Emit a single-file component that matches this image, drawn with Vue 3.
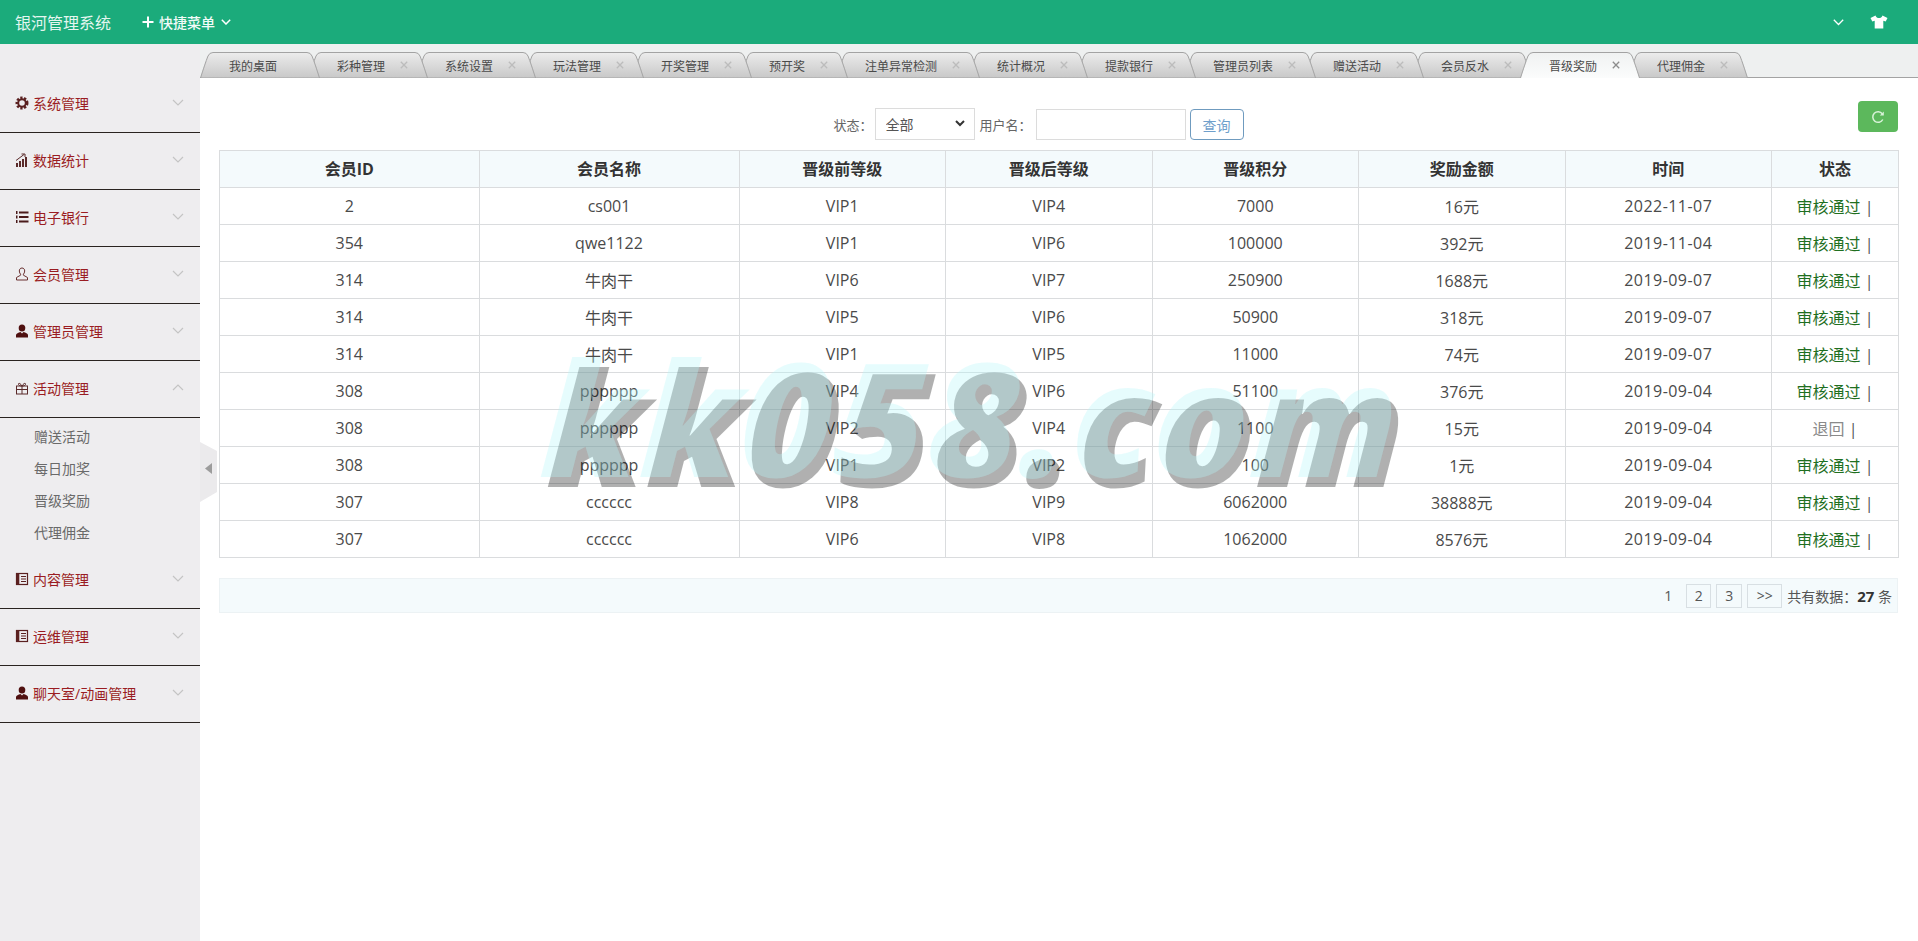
<script setup>
const menu = [
  { name: '系统管理', icon: 'gear' },
  { name: '数据统计', icon: 'chart' },
  { name: '电子银行', icon: 'list' },
  { name: '会员管理', icon: 'user' },
  { name: '管理员管理', icon: 'admin' },
  { name: '活动管理', icon: 'gift', open: true, subs: ['赠送活动', '每日加奖', '晋级奖励', '代理佣金'] },
  { name: '内容管理', icon: 'book' },
  { name: '运维管理', icon: 'book' },
  { name: '聊天室/动画管理', icon: 'admin' }
]

const tabNames = ['我的桌面', '彩种管理', '系统设置', '玩法管理', '开奖管理', '预开奖', '注单异常检测', '统计概况', '提款银行', '管理员列表', '赠送活动', '会员反水', '晋级奖励', '代理佣金']
const tabs = tabNames.map((name, i) => {
  const w = name.length * 12 + 72
  const edge = `M0.5 26C3 18 6 9 8 4Q9.5 .5 13 .5L${w - 13} .5Q${w - 9.5} .5 ${w - 8} 4C${w - 6} 9 ${w - 3} 18 ${w - 0.5} 26`
  return { name, w, edge, z: tabNames.length - i, active: name === '晋级奖励', closable: i > 0 }
})

const columns = ['会员ID', '会员名称', '晋级前等级', '晋级后等级', '晋级积分', '奖励金额', '时间', '状态']
const widths = [259.5, 260, 206.5, 206.5, 206.5, 206.5, 206.5, 127]
const rows = [
  ['2', 'cs001', 'VIP1', 'VIP4', '7000', '16元', '2022-11-07', 1],
  ['354', 'qwe1122', 'VIP1', 'VIP6', '100000', '392元', '2019-11-04', 1],
  ['314', '牛肉干', 'VIP6', 'VIP7', '250900', '1688元', '2019-09-07', 1],
  ['314', '牛肉干', 'VIP5', 'VIP6', '50900', '318元', '2019-09-07', 1],
  ['314', '牛肉干', 'VIP1', 'VIP5', '11000', '74元', '2019-09-07', 1],
  ['308', 'pppppp', 'VIP4', 'VIP6', '51100', '376元', '2019-09-04', 1],
  ['308', 'pppppp', 'VIP2', 'VIP4', '1100', '15元', '2019-09-04', 0],
  ['308', 'pppppp', 'VIP1', 'VIP2', '100', '1元', '2019-09-04', 1],
  ['307', 'cccccc', 'VIP8', 'VIP9', '6062000', '38888元', '2019-09-04', 1],
  ['307', 'cccccc', 'VIP6', 'VIP8', '1062000', '8576元', '2019-09-04', 1]
]
</script>

<template>
  <div class="page">
    <header class="topbar">
      <span class="brand">银河管理系统</span>
      <span class="quick">
        <svg class="plus" viewBox="0 0 12 12" width="12" height="12"><path d="M6 .5v11M.5 6h11" stroke="#fff" stroke-width="2" fill="none" /></svg>
        快捷菜单
        <svg class="chev" viewBox="0 0 10 6" width="10" height="6"><path d="M.8.8 5 5 9.2.8" stroke="#fff" stroke-width="1.5" fill="none" /></svg>
      </span>
      <span class="spacer"></span>
      <svg class="top-chev" viewBox="0 0 11 7" width="11" height="7"><path d="M.8.8 5.5 5.5 10.2.8" stroke="#fff" stroke-width="1.3" fill="none" /></svg>
      <svg class="shirt" viewBox="0 0 18 14" width="18" height="14"><path d="M5.5 .5 0.5 3l1.8 3.6 2.4-.9V13.5h8.6V5.7l2.4.9L17.500 3 12.500 .5C11.800 2.400 10.500 3 9 3S6.200 2.400 5.500 .5Z" fill="#fff" /></svg>
    </header>

    <div class="body">
      <aside class="sidebar">
        <template v-for="m in menu" :key="m.name">
          <div class="menu-item">
            <svg class="micon" viewBox="0 0 14 14" width="14" height="14">
              <g v-if="m.icon === 'gear'">
                <circle cx="7" cy="7" r="5.200" fill="none" stroke="#5a2020" stroke-width="2.600" stroke-dasharray="2.200 1.500" />
                <circle cx="7" cy="7" r="3.800" fill="none" stroke="#5a2020" stroke-width="2" />
              </g>
              <g v-else-if="m.icon === 'chart'" fill="#5a2a2a">
                <rect x="1" y="10" width="2" height="4" /><rect x="4" y="8" width="2" height="6" /><rect x="7" y="6" width="2" height="8" /><rect x="10" y="4" width="2" height="10" />
                <path d="M1 7.500 9 1.500M6.500 1h3.500v3" stroke="#5a2a2a" stroke-width="1" fill="none" />
              </g>
              <g v-else-if="m.icon === 'list'" fill="#4a1a1a">
                <rect x="1" y="1" width="1.500" height="3" /><rect x="1" y="5.500" width="1.500" height="3" /><rect x="1" y="10" width="1.500" height="3" />
                <rect x="4" y="1.500" width="9.500" height="2" /><rect x="4" y="6" width="9.500" height="2" /><rect x="4" y="10.500" width="9.500" height="2" />
              </g>
              <g v-else-if="m.icon === 'user'" fill="none" stroke="#6a3030" stroke-width="1">
                <path d="M7 1C5.200 1 4.300 2.400 4.300 4c0 1.500.7 2.600 1.300 3.200v1L1.500 10.500V13h11v-2.500L8.400 8.200v-1C9 6.600 9.700 5.500 9.700 4 9.700 2.400 8.800 1 7 1Z" />
              </g>
              <g v-else-if="m.icon === 'admin'" fill="#4f1010">
                <ellipse cx="7" cy="4" rx="3.300" ry="3.600" />
                <path d="M1 13.500v-2.500C1 9.500 3.500 8.500 5.500 8L7 9.500 8.500 8C10.500 8.500 13 9.500 13 11v2.500Z" />
              </g>
              <g v-else-if="m.icon === 'gift'" fill="none" stroke="#5a2a2a" stroke-width="1">
                <rect x="1.500" y="5" width="11" height="8" />
                <path d="M1.500 8.500h11M7 5v8M7 5C5 1.500 3 2 3.500 3.500 4 5 7 5 7 5ZM7 5c2-3.500 4-3 3.500-1.500C10 5 7 5 7 5Z" />
              </g>
              <g v-else fill="none" stroke="#5a2020">
                <rect x="1.500" y="1.500" width="11" height="11" stroke-width="1.200" />
                <path d="M3 1.500v11" stroke-width="2.600" />
                <path d="M6 4.500h5M6 7h5M6 9.500h5" stroke-width="1.200" />
              </g>
            </svg>
            <span class="mname">{{ m.name }}</span>
            <svg class="mchev" :class="{ up: m.open }" viewBox="0 0 12 7" width="12" height="7"><path d="M1 1 6 6 11 1" stroke="#c4c4c4" stroke-width="1.200" fill="none" /></svg>
          </div>
          <div v-if="m.subs" class="subs">
            <div v-for="s in m.subs" :key="s" class="sub">{{ s }}</div>
          </div>
        </template>
      </aside>

      <div class="handle">
        <svg viewBox="0 0 17 60" width="17" height="60">
          <path d="M0 0 17 9V50L0 60Z" fill="#ebeaec" />
          <path d="M12 21v11l-7-5.500Z" fill="#9c9c9c" />
        </svg>
      </div>

      <main class="main">
        <nav class="tabbar">
          <div
            v-for="t in tabs"
            :key="t.name"
            class="tab"
            :class="{ active: t.active }"
            :style="{ width: t.w + 'px', zIndex: t.active ? 50 : t.z }"
          >
            <svg class="tab-shape" :viewBox="`0 0 ${t.w} 26`" :width="t.w" height="26">
              <defs>
                <linearGradient id="tg" x1="0" y1="0" x2="0" y2="1"><stop offset="0" stop-color="#ececec" /><stop offset="1" stop-color="#c8c8c8" /></linearGradient>
                <linearGradient id="ta" x1="0" y1="0" x2="0" y2="1"><stop offset="0" stop-color="#f0f2f2" /><stop offset="1" stop-color="#fbfcfc" /></linearGradient>
              </defs>
              <path :d="t.edge + 'Z'" :fill="t.active ? 'url(#ta)' : 'url(#tg)'" />
              <path :d="t.active ? t.edge : t.edge + 'Z'" fill="none" stroke="#a3a3a3" stroke-width="1" />
            </svg>
            <span class="tab-text">{{ t.name }}</span>
            <svg v-if="t.closable" class="tab-x" viewBox="0 0 8 8" width="8" height="8"><path d="M.8.8l6.400 6.400M7.200.8.800 7.200" :stroke="t.active ? '#8c8c8c' : '#bcbcbc'" stroke-width="1.300" fill="none" /></svg>
          </div>
        </nav>

        <section class="content">
          <div class="toolbar">
            <div class="filters">
              <label class="lbl">状态：</label>
              <span class="sel-wrap">
                <select class="sel"><option>全部</option></select>
                <svg class="sel-arrow" viewBox="0 0 10 7" width="10" height="7"><path d="M1 1 5 5 9 1" stroke="#333" stroke-width="2" fill="none" /></svg>
              </span>
              <label class="lbl lbl2">用户名：</label>
              <input class="inp" type="text" />
              <button class="query" type="button">查询</button>
            </div>
            <button class="refresh" type="button" aria-label="刷新">
              <svg viewBox="0 0 14 14" width="14" height="14"><path d="M11.800 9.500A5.300 5.300 0 1 1 11.300 3.800" stroke="#d8f2d8" stroke-width="1.500" fill="none" /><path d="M12.800 1.500v4h-4Z" fill="#d8f2d8" /></svg>
            </button>
          </div>

          <table class="grid">
            <colgroup><col v-for="(w, i) in widths" :key="i" :style="{ width: w + 'px' }" /></colgroup>
            <thead><tr><th v-for="c in columns" :key="c">{{ c }}</th></tr></thead>
            <tbody>
              <tr v-for="(r, i) in rows" :key="i">
                <td>{{ r[0] }}</td><td>{{ r[1] }}</td><td>{{ r[2] }}</td><td>{{ r[3] }}</td><td>{{ r[4] }}</td><td>{{ r[5] }}</td>
                <td class="date">{{ r[6] }}</td>
                <td><span :class="r[7] ? 'pass' : 'back'">{{ r[7] ? '审核通过' : '退回' }}</span> <span class="pipe">|</span></td>
              </tr>
            </tbody>
          </table>

          <div class="pager">
            <span class="cur">1</span>
            <span class="pg pg2">2</span>
            <span class="pg pg3">3</span>
            <span class="pg pgn">&gt;&gt;</span>
            <span class="total">共有数据：<b>27</b> 条</span>
          </div>
        </section>
      </main>
    </div>

    <div class="wm wm-gray">kk058.com</div>
    <div class="wm wm-cyan">kk058.com</div>
  </div>
</template>

<style scoped>
.page {
  position: relative;
  width: 1918px;
  height: 941px;
  overflow: hidden;
  display: flex;
  flex-direction: column;
  background: #fff;
  color: #4a4a4a;
  font-family: "Open Sans", "Noto Sans CJK SC", sans-serif;
}
.topbar {
  height: 44px;
  flex: none;
  display: flex;
  align-items: center;
  background: #1bab7b;
  color: #fff;
  padding-left: 15px;
}
.brand { font-size: 16px; color: #e4f6f0; width: 127px; }
.quick { display: flex; align-items: center; font-size: 14px; font-weight: 500; color: #f2fbf8; }
.plus { margin-right: 5px; }
.chev { margin-left: 6px; }
.spacer { flex: 1; }
.top-chev { margin-right: 26px; }
.shirt { margin-right: 30px; }

.body { flex: 1; display: flex; min-height: 0; }
.sidebar {
  width: 200px;
  flex: none;
  background: #eeedef;
  padding-top: 31px;
  box-sizing: border-box;
}
.menu-item {
  height: 58px;
  margin-bottom: -1px;
  box-sizing: border-box;
  border-bottom: 1px solid #2a2320;
  display: flex;
  align-items: center;
  padding: 0 16px 2px 15px;
}
.micon { flex: none; margin-right: 4px; }
.mname { flex: 1; font-size: 14px; color: #9a1c22; }
.mchev.up { transform: rotate(180deg); }
.subs { padding: 4px 0 2px 34px; }
.sub { height: 32px; line-height: 32px; font-size: 14px; color: #6a6a6a; }

.handle { position: absolute; left: 200px; top: 442px; width: 17px; height: 60px; z-index: 3; }
.handle svg { display: block; }

.main { flex: 1; min-width: 0; display: flex; flex-direction: column; }
.tabbar {
  height: 34px;
  flex: none;
  box-sizing: border-box;
  padding-top: 8px;
  background: #eef0f0;
  border-bottom: 1px solid #a3a3a3;
  display: flex;
  position: relative;
}
.tab {
  position: relative;
  flex: none;
  height: 26px;
  margin-right: -12px;
  display: flex;
  align-items: center;
  font-size: 12px;
  color: #4a4a4a;
}
.tab-shape { position: absolute; left: 0; top: 0; }
.tab-text { position: relative; padding-left: 29px; padding-top: 1px; }
.tab-x { position: relative; margin-left: 15px; }

.content { padding: 23px 20px 0 19px; }
.toolbar { display: flex; align-items: flex-start; height: 49px; }
.filters { flex: 1; display: flex; justify-content: center; align-items: center; margin-top: 7px; height: 32px; }
.lbl { font-size: 13px; color: #666; width: 41px; }
.lbl2 { width: 56px; margin-left: 5px; }
.sel-wrap { position: relative; display: block; width: 100px; height: 32px; }
.sel {
  display: block;
  appearance: none;
  width: 100px;
  height: 32px;
  box-sizing: border-box;
  border: 1px solid #dcdcdc;
  border-radius: 0;
  background: #fff;
  color: #555;
  font: 14px "Open Sans", "Noto Sans CJK SC", sans-serif;
  padding-left: 10px;
  outline: none;
}
.sel-arrow { position: absolute; right: 10px; top: 12px; pointer-events: none; }
.inp {
  width: 150px;
  height: 31px;
  box-sizing: border-box;
  border: 1px solid #dcdcdc;
  background: #fff;
  margin-top: 1px;
  outline: none;
}
.query {
  width: 54px;
  height: 31px;
  box-sizing: border-box;
  margin: 1px 0 0 4px;
  padding: 0;
  border: 1px solid #6f9bbf;
  border-radius: 4px;
  background: #fff;
  color: #6f9fcb;
  font: 14px "Open Sans", "Noto Sans CJK SC", sans-serif;
}
.refresh {
  width: 40px;
  height: 31px;
  flex: none;
  padding: 0;
  border: 0;
  border-radius: 4px;
  background: #5cb85c;
  display: flex;
  align-items: center;
  justify-content: center;
}

.grid {
  width: 1679px;
  table-layout: fixed;
  border-collapse: collapse;
  font-size: 16px;
  color: #4a4a4a;
}
.grid th, .grid td {
  height: 37px;
  padding: 0;
  box-sizing: border-box;
  border: 1px solid #dadcde;
  text-align: center;
  font-weight: 400;
}
.grid th { background: #f4fafc; color: #333; font-weight: 700; padding-bottom: 2px; }
.date { letter-spacing: .45px; }
.pass { color: #1f6f1f; }
.back { color: #8a8a8a; }
.pipe { color: #555; }

.pager {
  margin-top: 20px;
  height: 35px;
  box-sizing: border-box;
  background: #f4fafc;
  border: 1px solid #ecf2f4;
  display: flex;
  align-items: center;
  justify-content: flex-end;
  padding-right: 5px;
  font-size: 14px;
  color: #555;
}
.cur { margin-right: 14px; }
.pg {
  height: 24px;
  box-sizing: border-box;
  border: 1px solid #d8dfe3;
  display: flex;
  align-items: center;
  justify-content: center;
  margin-right: 5px;
  width: 25px;
}
.pg3 { width: 26px; }
.pgn { width: 35px; }
.total b { font-size: 15px; color: #333; }

.wm {
  position: absolute;
  font-family: "Open Sans", "Liberation Sans", sans-serif;
  font-weight: 800;
  font-style: italic;
  font-size: 158px;
  line-height: 1;
  white-space: nowrap;
  pointer-events: none;
  transform-origin: 0 100%;
  transform: scaleX(1.005) skewX(-3deg);
  letter-spacing: 1.5px;
}
.wm-gray { left: 545px; top: 347px; color: rgba(0, 0, 0, .31); z-index: 10; }
.wm-cyan { left: 538px; top: 337px; color: rgba(182, 245, 250, .34); z-index: 11; }
</style>

<style>
html, body { margin: 0; overflow: hidden; }
</style>
